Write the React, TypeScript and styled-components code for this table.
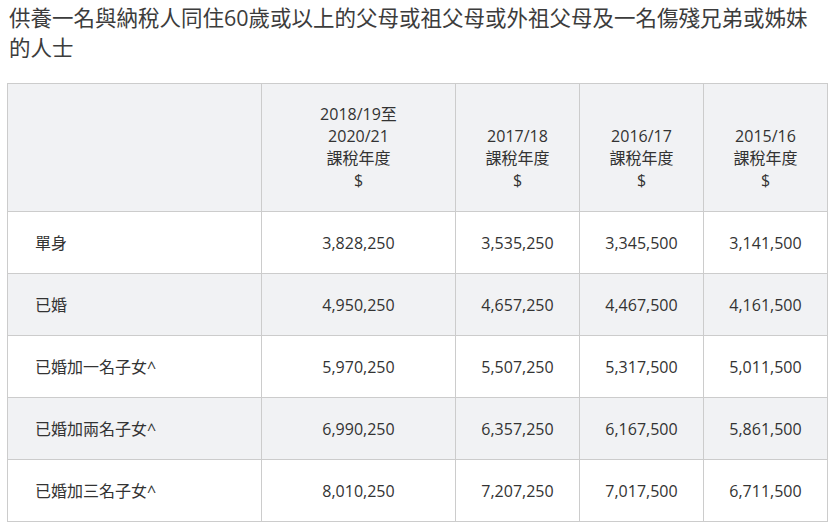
import React from "react";
import styled, { createGlobalStyle } from "styled-components";

const GlobalStyle = createGlobalStyle`
  html, body { margin: 0; padding: 0; background: #ffffff; }
  body {
    font-family: "Open Sans", "Noto Sans CJK TC", sans-serif;
    color: #333333;
  }
`;

const Page = styled.div`
  width: 838px;
  padding: 3px 11px 0 7px;
  box-sizing: border-box;
`;

const Title = styled.h2`
  margin: 0 0 20px 2px;
  font-size: 21.5px;
  line-height: 30px;
  font-weight: 400;
  color: #3c3c3c;
`;

const Table = styled.table`
  width: 820px;
  border-collapse: collapse;
  table-layout: fixed;
  font-size: 16px;
  line-height: 22px;
  color: #333333;
`;

const Row = styled.tr<{ $shaded?: boolean }>`
  background: ${(p) => (p.$shaded ? "#f1f2f4" : "#ffffff")};
`;

const HeadCell = styled.th`
  border: 1px solid #cccccc;
  padding: 19px 8px 20px;
  font-weight: 400;
  text-align: center;
  vertical-align: bottom;
`;

const LabelCell = styled.td`
  border: 1px solid #cccccc;
  padding: 20px 8px 19px 27px;
  text-align: left;
  vertical-align: middle;
`;

const NumCell = styled.td`
  border: 1px solid #cccccc;
  padding: 20px 8px 19px;
  text-align: center;
  vertical-align: middle;
`;

const Line = styled.span`
  display: block;
`;

const headers: string[][] = [
  ["2018/19至", "2020/21", "課稅年度", "$"],
  ["2017/18", "課稅年度", "$"],
  ["2016/17", "課稅年度", "$"],
  ["2015/16", "課稅年度", "$"],
];

const rows: { label: string; values: string[] }[] = [
  { label: "單身", values: ["3,828,250", "3,535,250", "3,345,500", "3,141,500"] },
  { label: "已婚", values: ["4,950,250", "4,657,250", "4,467,500", "4,161,500"] },
  { label: "已婚加一名子女^", values: ["5,970,250", "5,507,250", "5,317,500", "5,011,500"] },
  { label: "已婚加兩名子女^", values: ["6,990,250", "6,357,250", "6,167,500", "5,861,500"] },
  { label: "已婚加三名子女^", values: ["8,010,250", "7,207,250", "7,017,500", "6,711,500"] },
];

export default function App() {
  return (
    <>
      <GlobalStyle />
      <Page>
        <Title>
          供養一名與納稅人同住60歲或以上的父母或祖父母或外祖父母及一名傷殘兄弟或姊妹的人士
        </Title>
        <Table>
          <colgroup>
            <col style={{ width: 254 }} />
            <col style={{ width: 194 }} />
            <col style={{ width: 124 }} />
            <col style={{ width: 124 }} />
            <col style={{ width: 124 }} />
          </colgroup>
          <thead>
            <Row $shaded>
              <HeadCell />
              {headers.map((h, i) => (
                <HeadCell key={i}>
                  {h.map((l, j) => (
                    <Line key={j}>{l}</Line>
                  ))}
                </HeadCell>
              ))}
            </Row>
          </thead>
          <tbody>
            {rows.map((r, i) => (
              <Row key={r.label} $shaded={i % 2 === 1}>
                <LabelCell>{r.label}</LabelCell>
                {r.values.map((v, j) => (
                  <NumCell key={j}>{v}</NumCell>
                ))}
              </Row>
            ))}
          </tbody>
        </Table>
      </Page>
    </>
  );
}
